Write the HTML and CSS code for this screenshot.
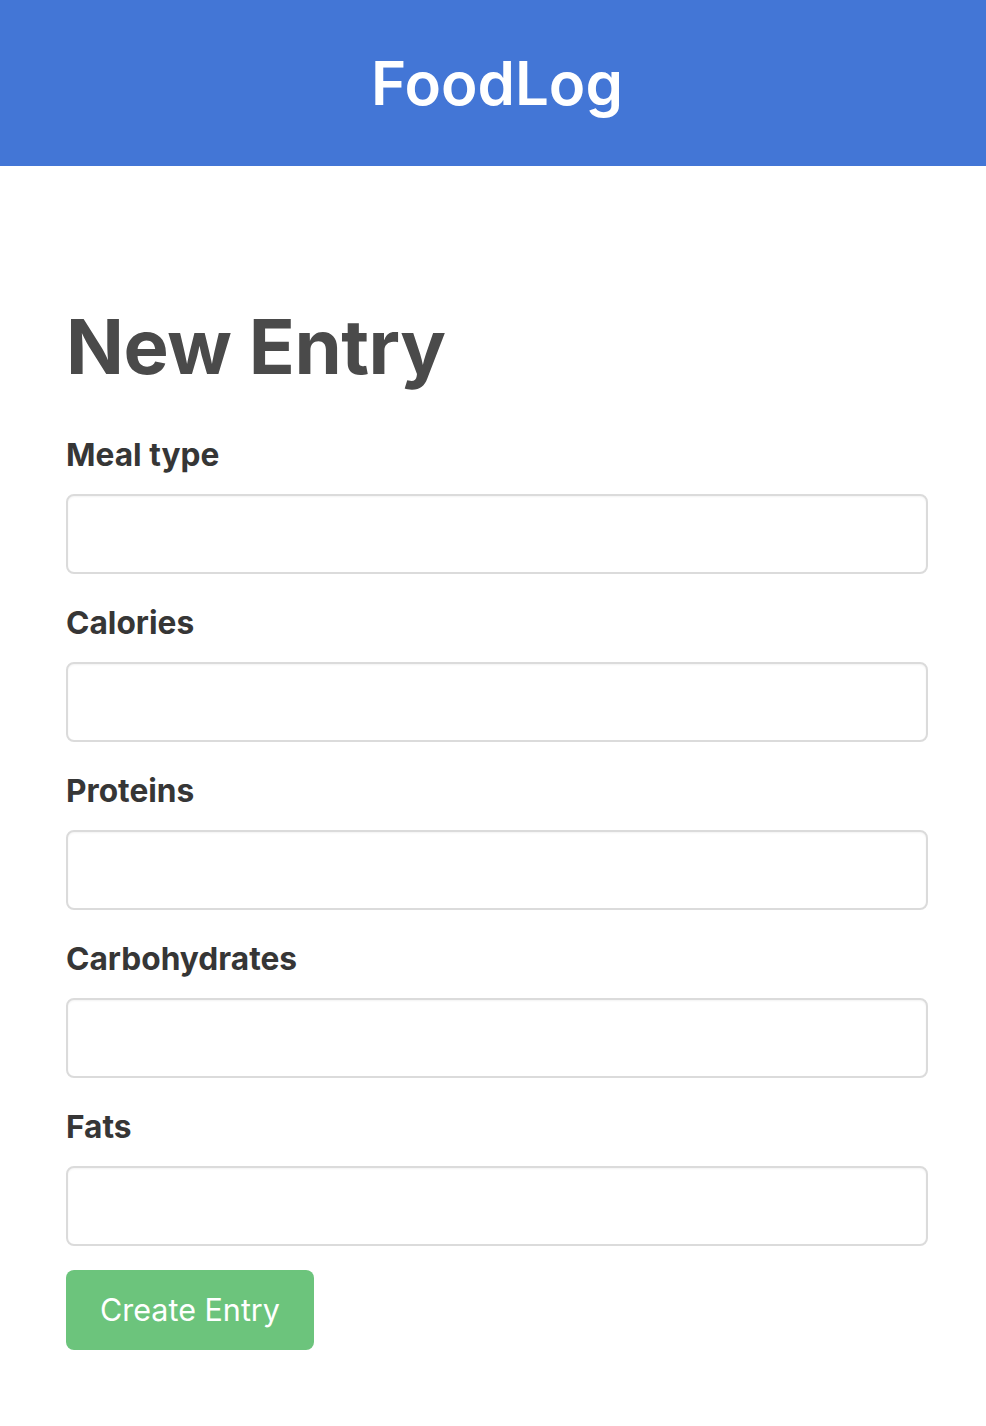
FILE: index.html
```html
<!DOCTYPE html>
<html lang="en">
<head>
<meta charset="utf-8">
<title>FoodLog</title>
<link rel="stylesheet" href="styles.css">
</head>
<body>
<header class="topbar">
  <h1 class="brand">FoodLog</h1>
</header>
<main class="section">
  <h2 class="title">New Entry</h2>
  <form class="form">
    <div class="field">
      <label class="label">Meal type</label>
      <input class="input" type="text">
    </div>
    <div class="field">
      <label class="label">Calories</label>
      <input class="input" type="text">
    </div>
    <div class="field">
      <label class="label">Proteins</label>
      <input class="input" type="text">
    </div>
    <div class="field">
      <label class="label">Carbohydrates</label>
      <input class="input" type="text">
    </div>
    <div class="field">
      <label class="label">Fats</label>
      <input class="input" type="text">
    </div>
    <div class="actions">
      <button class="button" type="button">Create Entry</button>
    </div>
  </form>
</main>
</body>
</html>
```

FILE: styles.css
```css
* { box-sizing: border-box; }
html, body { margin: 0; padding: 0; background: #fff; }
body { font-family: Inter, "Noto Sans", sans-serif; }

.topbar {
  height: 166px;
  background: #4376d6;
  display: flex;
  align-items: center;
  justify-content: center;
}
.brand {
  margin: 0 0 0 8px;
  color: #fff;
  font-size: 60px;
  font-weight: 600;
  line-height: 1;
}

.section {
  padding: 138px 58px 40px 66px;
}
.title {
  margin: 0 0 43px;
  font-size: 76px;
  font-weight: 700;
  line-height: 84px;
  color: #4a4a4a;
  letter-spacing: -0.5px;
}
.form { display: flex; flex-direction: column; gap: 25px; }
.field { display: flex; flex-direction: column; }
.label {
  font-size: 31.7px;
  font-weight: 700;
  line-height: 48px;
  color: #363636;
  margin-bottom: 15px;
}
.input {
  width: 862px;
  height: 80px;
  border: 2px solid #dbdbdb;
  border-radius: 8px;
  background: #fff;
  box-shadow: inset 0 1px 2px rgba(10,10,10,0.05);
  font: inherit;
}
.actions { display: flex; margin-top: -1px; }
.button {
  width: 248px;
  height: 80px;
  border: none;
  border-radius: 8px;
  background: #6cc47c;
  color: #fff;
  font-family: Inter, "Noto Sans", sans-serif;
  font-size: 30.5px;
  font-weight: 400;
  padding: 0 0 2px;
}
```
